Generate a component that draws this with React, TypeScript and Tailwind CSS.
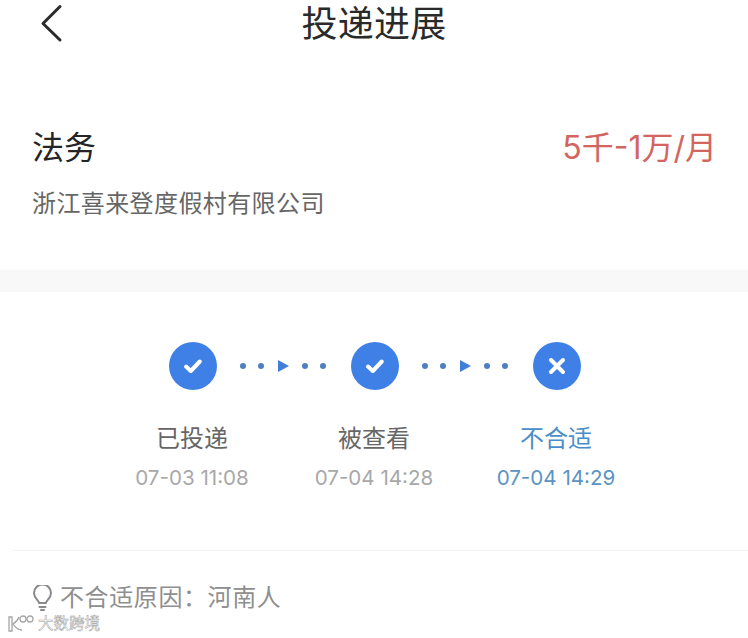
import React from 'react'

const cjk = '[font-family:Inter,"Noto_Sans_CJK_SC",sans-serif]'

const steps = [
    { label: '已投递', time: '07-03 11:08', kind: 'check' },
    { label: '被查看', time: '07-04 14:28', kind: 'check' },
    { label: '不合适', time: '07-04 14:29', kind: 'cross' },
]

function StepIcon({ kind }: { kind: string }) {
    return (
        <div className="flex h-12 w-12 items-center justify-center rounded-full bg-[#3f80e6]">
            <svg width="24" height="24" viewBox="0 0 24 24" fill="none" stroke="white" strokeWidth="4" strokeLinecap="round" strokeLinejoin="round">
                {kind === 'check' ? (
                    <path d="M5 12.500l4.800 4.500 9-9.500" />
                ) : (
                    <path d="M6 6l12 12M18 6L6 18" />
                )}
            </svg>
        </div>
    )
}

function Dots() {
    return (
        <div className="flex h-12 w-[134px] items-center justify-center">
            <svg width="90" height="12" viewBox="0 0 90 12" fill="#4f7fc0">
                <circle cx="4" cy="6" r="3" />
                <circle cx="22" cy="6" r="3" />
                <path d="M39 0l11 6-11 6z" fill="#3f7fd8" />
                <circle cx="66" cy="6" r="3" />
                <circle cx="84" cy="6" r="3" />
            </svg>
        </div>
    )
}

export default function App() {
    return (
        <div className={`relative flex h-[638px] w-[748px] flex-col overflow-hidden bg-white ${cjk}`}>
            <header className="relative flex h-[48px] shrink-0 items-center justify-center">
                <svg className="absolute left-[38px] top-[3px]" width="28" height="40" viewBox="0 0 28 40" fill="none" stroke="#2b2b2b" strokeWidth="3" strokeLinecap="round" strokeLinejoin="round">
                    <path d="M22 3.5L5 20.5 22 37" />
                </svg>
                <h1 className="text-[36px] leading-[48px] font-normal tracking-[0.2px] text-[#2a2a2a]">投递进展</h1>
            </header>

            <section className="h-[222px] shrink-0 pl-[32px] pr-[31px] pt-[78px]">
                <div className="flex h-[44px] items-center justify-between">
                    <span className="text-[32px] leading-[44px] text-[#252525]">法务</span>
                    <span className="text-[32px] leading-[44px] text-[#d2665f]">5千-1万/月</span>
                </div>
                <p className="mt-[17px] text-[24px] leading-[34px] tracking-[0.4px] text-[#666666]">浙江喜来登度假村有限公司</p>
            </section>

            <div className="h-[22px] shrink-0 bg-[#f8f8f8]" />

            <section className="ml-[12px] flex h-[259px] shrink-0 flex-col border-b border-[#f3f3f3] pt-[50px]">
                <div className="flex items-center justify-center pr-[10px]">
                    <StepIcon kind="check" />
                    <Dots />
                    <StepIcon kind="check" />
                    <Dots />
                    <StepIcon kind="cross" />
                </div>
                <div className="mt-[24px] flex justify-center pr-[12px]">
                    {steps.map((s) => (
                        <div key={s.label} className="flex w-[182px] flex-col items-center">
                            <span className={`mt-[8px] text-[24px] leading-[34px] ${s.kind === 'cross' ? 'text-[#4a8ec9]' : 'text-[#666666]'}`}>
                                {s.label}
                            </span>
                            <span className={`mt-[8px] text-[20.600px] leading-[28px] ${s.kind === 'cross' ? 'text-[#5b93c4]' : 'text-[#a8a8a8]'}`}>
                                {s.time}
                            </span>
                        </div>
                    ))}
                </div>
            </section>

            <div className="flex items-center gap-[7px] pl-[32px] pt-[30px]">
                <svg width="21" height="26" viewBox="0 0 21 26" fill="none" stroke="#8a8a8a" strokeWidth="2" strokeLinecap="round" strokeLinejoin="round">
                    <path d="M7 18c0-3-5-4.5-5-10a8.500 8.500 0 0 1 17 0c0 5.500-5 7-5 10z" />
                    <path d="M7.500 22h6M9 25h3" />
                </svg>
                <span className="text-[24px] leading-[34px] tracking-[0.6px] text-[#8f8f8f]">不合适原因：河南人</span>
            </div>

            {/* watermark over the page corner */}
            <div className="absolute left-[7px] top-[614px] flex items-center gap-[4px]">
                <svg width="27" height="19" viewBox="0 0 27 19" fill="none" stroke="#a5a5a5" strokeWidth="1.3">
                    <path d="M2 3v14h3V3zM6 10c3-2 5-4 6-7M6 10c2 3 5 6 9 6" />
                    <circle cx="16" cy="5" r="3" />
                    <circle cx="23" cy="5" r="3" />
                </svg>
                <span className="text-[15.500px] leading-[19px] text-white [-webkit-text-stroke:0.5px_#a0a0a0]">大数跨境</span>
            </div>
        </div>
    )
}
